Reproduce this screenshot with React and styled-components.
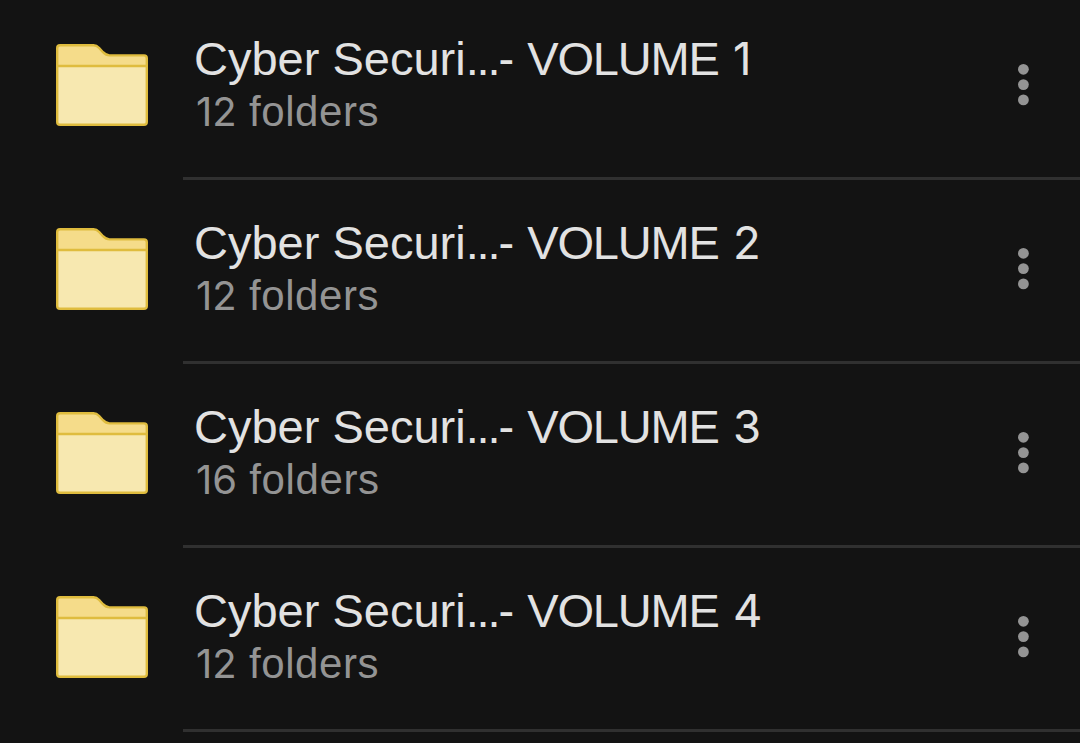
import React from 'react';
import styled, { createGlobalStyle } from 'styled-components';

const GlobalStyle = createGlobalStyle`
  body {
    margin: 0;
    background: #131313;
    overflow: hidden;
  }
`;

const List = styled.div`
  height: 743px;
  overflow: hidden;
  background: #131313;
  font-family: "Liberation Sans", Arial, sans-serif;
`;

const Row = styled.div`
  display: flex;
  box-sizing: border-box;
  height: 184px;
  padding-left: 56px;

  &:first-child {
    margin-top: -4px;
  }
`;

const FolderIcon = styled.svg`
  flex: none;
  width: 92px;
  height: 82px;
  margin: 48px 35px 0 0;
`;

const Content = styled.div`
  flex: 1;
  display: flex;
  justify-content: space-between;
  box-sizing: border-box;
  border-bottom: 3px solid #303030;
`;

const Info = styled.div`
  padding: 36px 0 0 11px;
  white-space: nowrap;
`;

const Title = styled.div`
  display: flex;
  align-items: baseline;
  height: 54px;
  line-height: 54px;
  font-size: 47px;
  color: #e2e2e2;
`;

const Count = styled.div`
  display: flex;
  align-items: baseline;
  height: 50px;
  padding-left: 2px;
  line-height: 51px;
  font-size: 42px;
  color: #949494;
`;

const TextPart = styled.span`
  white-space: pre;
  letter-spacing: ${({ $spacing = 0 }) => $spacing}px;
`;

const Digits = styled.span`
  margin-left: ${({ $gap = 0 }) => $gap}px;
  font-family: Inter, sans-serif;
  font-size: ${({ $size }) => $size}px;
`;

const MenuButton = styled.button`
  display: flex;
  width: 113px;
  height: 64px;
  margin-top: 56px;
  padding: 0;
  border: 0;
  background: none;
`;

const items = [
    { volume: 1, folders: 12 },
    { volume: 2, folders: 12 },
    { volume: 3, folders: 16 },
    { volume: 4, folders: 12 },
];

const Folder = () => (
    <FolderIcon viewBox="0 0 92 82">
        <path
            d="M4 1.2H37.5C40 1.2 41.5 2.2 43.2 4L47 8.2C49 10.3 50.5 11.4 53.5 11.4H88Q90.8 11.4 90.8 14.2V22H1.2V4Q1.2 1.2 4 1.2Z"
            fill="#f5dc8a"
        />
        <path d="M1.2 22H90.8V78Q90.8 80.8 88 80.8H4Q1.2 80.8 1.2 78Z" fill="#f7e8b0" />
        <path
            d="M4 1.2H37.5C40 1.2 41.5 2.2 43.2 4L47 8.2C49 10.3 50.5 11.4 53.5 11.4H88Q90.8 11.4 90.8 14.2V78Q90.8 80.8 88 80.8H4Q1.2 80.8 1.2 78V4Q1.2 1.2 4 1.2ZM1.2 22H90.8"
            fill="none"
            stroke="#dfbc3e"
            strokeWidth="2.4"
        />
    </FolderIcon>
);

const FolderRow = ({ volume, folders }) => (
    <Row>
        <Folder />
        <Content>
            <Info>
                <Title>
                    <TextPart>Cyber Securi</TextPart>
                    <TextPart $spacing={-2.1}>...</TextPart>
                    <TextPart>- </TextPart>
                    <TextPart $spacing={-1.2}>VOLUME </TextPart>
                    <Digits $size={45.5} $gap={2.5}>{volume}</Digits>
                </Title>
                <Count>
                    <Digits $size={40}>{folders}</Digits>
                    <TextPart $spacing={0.6}> folders</TextPart>
                </Count>
            </Info>
            <MenuButton aria-label="More options">
                <svg width="113" height="64" fill="#949494">
                    <circle cx="56.4" cy="17.3" r="5.4" />
                    <circle cx="56.4" cy="32.6" r="5.4" />
                    <circle cx="56.4" cy="47.9" r="5.4" />
                </svg>
            </MenuButton>
        </Content>
    </Row>
);

const App = () => {
    return (
        <>
            <GlobalStyle />
            <List>
                {items.map((item) => (
                    <FolderRow key={item.volume} {...item} />
                ))}
            </List>
        </>
    );
};

export default App;
